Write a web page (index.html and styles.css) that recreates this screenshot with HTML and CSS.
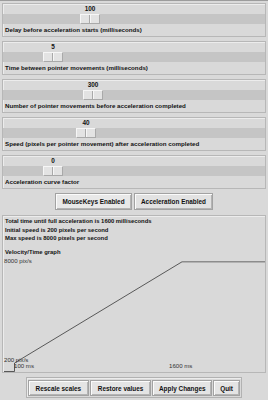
FILE: index.html
```html
<!DOCTYPE html>
<html>
<head>
<meta charset="utf-8">
<link rel="stylesheet" href="styles.css">
</head>
<body>
<div class="win">
  <div class="scale">
    <div class="val-row"><span class="val" style="left:87px">100</span></div>
    <div class="trough"><span class="thumb" style="left:77px"></span></div>
    <div class="lbl">Delay before acceleration starts (milliseconds)</div>
  </div>
  <div class="scale">
    <div class="val-row"><span class="val" style="left:50px">5</span></div>
    <div class="trough"><span class="thumb" style="left:40px"></span></div>
    <div class="lbl">Time between pointer movements (milliseconds)</div>
  </div>
  <div class="scale">
    <div class="val-row"><span class="val" style="left:90px">300</span></div>
    <div class="trough"><span class="thumb" style="left:80px"></span></div>
    <div class="lbl">Number of pointer movements before acceleration completed</div>
  </div>
  <div class="scale">
    <div class="val-row"><span class="val" style="left:83px">40</span></div>
    <div class="trough"><span class="thumb" style="left:73px"></span></div>
    <div class="lbl">Speed (pixels per pointer movement) after acceleration completed</div>
  </div>
  <div class="scale">
    <div class="val-row"><span class="val" style="left:50px">0</span></div>
    <div class="trough"><span class="thumb" style="left:40px"></span></div>
    <div class="lbl">Acceleration curve factor</div>
  </div>

  <div class="toggles">
    <button class="btn btn-mk">MouseKeys Enabled</button>
    <button class="btn btn-acc">Acceleration Enabled</button>
  </div>

  <div class="info">
    <p>Total time until full acceleration is 1600 milliseconds</p>
    <p>Initial speed is 200 pixels per second</p>
    <p>Max speed is 8000 pixels per second</p>
    <p class="graph-title">Velocity/Time graph</p>
    <div class="graph">
      <svg class="plot" width="262" height="116" viewBox="0 0 262 116">
        <polyline points="0,115.5 10.5,115.5 10.5,107 178,5.8" fill="none" stroke="#4a4a4a" stroke-width="0.9"/>
        <line x1="178" y1="5.8" x2="261" y2="5.8" stroke="#8c8c8c" stroke-width="1.4"/>
      </svg>
      <span class="axis ax-max">8000 pix/s</span>
      <span class="axis ax-min">200 pix/s</span>
      <span class="axis ax-t0">100 ms</span>
      <span class="axis ax-t1">1600 ms</span>
    </div>
  </div>

  <div class="actions">
    <button class="btn act act-rescale">Rescale scales</button>
    <button class="btn act act-restore">Restore values</button>
    <button class="btn act act-apply">Apply Changes</button>
    <button class="btn act act-quit">Quit</button>
  </div>
</div>
</body>
</html>
```
FILE: styles.css
```css
html, body {
  margin: 0;
  padding: 0;
  background: #d9d9d9;
}
body {
  font-family: "Liberation Sans", Arial, sans-serif;
  color: #111;
}
.win {
  width: 268px;
  height: 400px;
  box-sizing: border-box;
  border-top: 1px solid #9c9c9c;
  padding-top: 2px;
  overflow: hidden;
}
.scale {
  margin: 0 2px 4px;
  height: 34px;
  box-sizing: border-box;
  border: 1px solid #b7b7b7;
  box-shadow: inset 1px 1px 0 #ececec;
  display: flex;
  flex-direction: column;
}
.val-row {
  height: 10px;
  position: relative;
}
.val {
  position: absolute;
  top: 0;
  line-height: 10px;
  font-size: 6.4px;
  font-weight: bold;
  transform: translateX(-50%);
}
.trough {
  height: 10px;
  background: #c5c5c5;
  position: relative;
}
.thumb {
  position: absolute;
  top: 0;
  width: 20px;
  height: 10px;
  box-sizing: border-box;
  background: #e3e3e3;
  border: 1px solid;
  border-color: #f6f6f6 #a9a9a9 #a9a9a9 #f6f6f6;
}
.thumb::after {
  content: "";
  position: absolute;
  left: 8px;
  top: 0;
  bottom: 0;
  width: 1px;
  background: #a9a9a9;
  box-shadow: 1px 0 0 #f6f6f6;
}
.lbl {
  height: 12px;
  line-height: 12px;
  font-size: 6.2px;
  font-weight: bold;
  padding-left: 2px;
  white-space: nowrap;
}
.toggles {
  display: flex;
  justify-content: center;
  gap: 2px;
  margin: 0 0 5px;
}
.btn {
  font-family: "Liberation Sans", Arial, sans-serif;
  font-size: 6.4px;
  font-weight: bold;
  color: #111;
  height: 17px;
  padding: 0;
  box-sizing: border-box;
  background: #e2e2e2;
  border: 1px solid #a2a2a2;
  box-shadow: inset 1px 1px 0 #fbfbfb, inset -1px -1px 0 #b4b4b4;
  white-space: nowrap;
}
.btn-mk { width: 77px; background: #e8e8e8; }
.btn-acc { width: 79px; }
.info {
  margin: 0 2px;
  height: 158px;
  box-sizing: border-box;
  border: 1px solid #b7b7b7;
  box-shadow: inset 1px 1px 0 #ececec;
  padding: 1px 0 0 1px;
}
.info p {
  margin: 0;
  font-size: 5.9px;
  font-weight: bold;
  line-height: 8.5px;
  padding-left: 1px;
  white-space: nowrap;
}
.info .graph-title {
  margin-top: 5px;
}
.graph {
  position: relative;
  height: 115px;
}
.plot {
  position: absolute;
  left: 0;
  top: 0;
}
.axis {
  position: absolute;
  font-size: 6.1px;
  line-height: 8px;
  color: #333;
  white-space: nowrap;
}
.ax-max { left: 0; top: 1px; }
.ax-min { left: 0; top: 100px; }
.ax-t0 { left: 10px; top: 106px; }
.ax-t1 { left: 165px; top: 106px; }
.actions {
  margin: 4px auto 0;
  width: 216px;
  height: 21px;
  box-sizing: border-box;
  border: 1px solid #b2b2b2;
  box-shadow: inset 1px 1px 0 #ececec;
  display: flex;
  gap: 1px;
  padding: 2px 1px;
}
.act {
  height: 16px;
  background: #e4e4e4;
}
.act-rescale { width: 61px; }
.act-restore { width: 62px; }
.act-apply { width: 60px; }
.act-quit { width: 27px; }
```
